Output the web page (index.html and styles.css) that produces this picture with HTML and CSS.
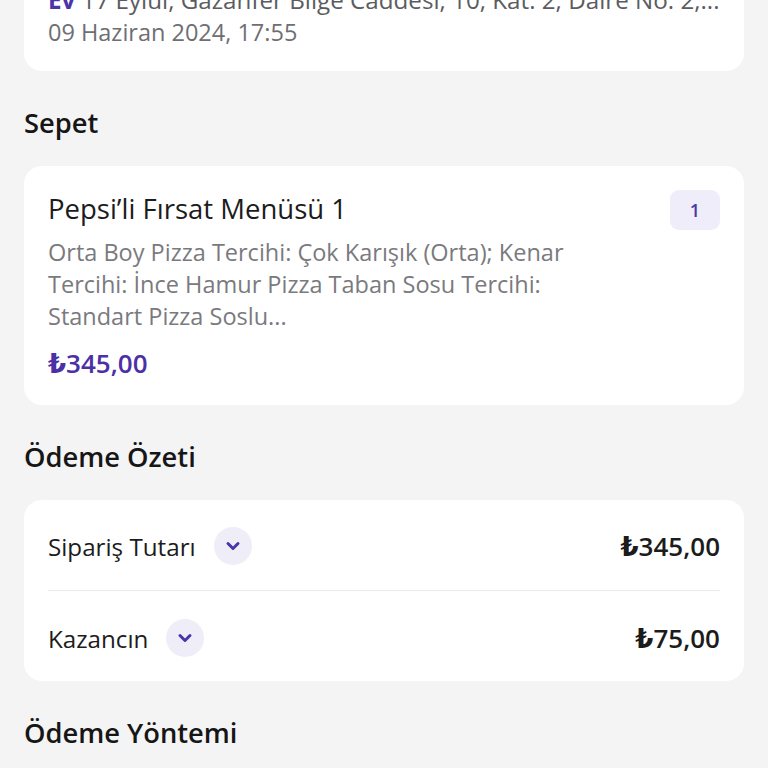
FILE: index.html
```html
<!DOCTYPE html>
<html lang="tr">
  <head>
    <meta charset="UTF-8">
    <title>Sipariş Detayı</title>
    <link rel="stylesheet" href="styles.css">
  </head>
  <body>
    <div class="page">

      <div class="card address">
        <p class="addr-line"><strong>Ev</strong> 17 Eylül, Gazanfer Bilge Caddesi, 10, Kat: 2, Daire No: 2,...</p>
        <p class="date">09 Haziran 2024, 17:55</p>
      </div>

      <h2>Sepet</h2>

      <div class="card basket">
        <div class="item-head">
          <div class="item-text">
            <p class="item-title">Pepsi’li Fırsat Menüsü 1</p>
            <p class="item-desc">Orta Boy Pizza Tercihi: Çok Karışık (Orta); Kenar Tercihi: İnce Hamur Pizza Taban Sosu Tercihi: Standart Pizza Soslu...</p>
          </div>
          <span class="qty">1</span>
        </div>
        <p class="item-price">₺345,00</p>
      </div>

      <h2>Ödeme Özeti</h2>

      <div class="card summary">
        <div class="row">
          <span class="label">Sipariş Tutarı</span>
          <span class="toggle">
            <svg width="16" height="10" viewBox="0 0 16 10"><path d="M3 2.5l5 5 5-5" fill="none" stroke="#4b35a8" stroke-width="3" stroke-linecap="round" stroke-linejoin="round"/></svg>
          </span>
          <span class="amount">₺345,00</span>
        </div>
        <div class="row">
          <span class="label">Kazancın</span>
          <span class="toggle">
            <svg width="16" height="10" viewBox="0 0 16 10"><path d="M3 2.5l5 5 5-5" fill="none" stroke="#4b35a8" stroke-width="3" stroke-linecap="round" stroke-linejoin="round"/></svg>
          </span>
          <span class="amount">₺75,00</span>
        </div>
      </div>

      <h2>Ödeme Yöntemi</h2>

    </div>
  </body>
</html>
```

FILE: styles.css
```css
html { margin: 0; padding: 0; background-color: #f4f4f4; }
body { margin: 0; font-family: "Open Sans", "DejaVu Sans", sans-serif; color: #1d1d1f; overflow: hidden; }
p { margin: 0; }

.page { margin-top: -40px; padding: 0 24px; }

.card { background-color: #fff; border-radius: 18px; }

h2 { margin: 35px 0 27px 0; font-size: 27.3px; font-weight: 600; line-height: 32px; color: #161616; }
.card + h2 { margin-top: 36px; }

/* address card */
.address { padding: 24px 24px 23px 24px; }
.addr-line, .date { font-size: 23.5px; line-height: 32px; white-space: nowrap; overflow: hidden; }
.addr-line { font-size: 24.2px; color: #5c5c60; }
.addr-line strong { color: #4b35a8; font-weight: 700; }
.date { color: #6e6e73; }

/* basket */
.basket { padding: 24px 24px 26px 24px; }
.item-head { display: flex; justify-content: space-between; align-items: flex-start; }
.item-title { font-size: 27.5px; line-height: 38px; color: #1c1c1c; }
.item-desc { margin-top: 8px; max-width: 550px; font-size: 23.5px; line-height: 32px; color: #7a7a7e; }
.qty { flex: none; width: 50px; height: 40px; display: flex; align-items: center; justify-content: center;
       background-color: #efedfa; border-radius: 9px; color: #4a3aa0; font-size: 18px; font-weight: 600; }
.item-price { margin-top: 15px; font-size: 26px; line-height: 32px; font-weight: 600; color: #4b30a6; }

/* summary */
.summary { padding: 0 24px; }
.row { display: flex; align-items: center; gap: 18px; height: 38px; padding: 27px 0 25px 0; }
.row + .row { border-top: 1px solid #ecebf4; padding-top: 28px; padding-bottom: 24px; }
.label { font-size: 24.2px; font-weight: 500; color: #1c1c1c; }
.toggle { width: 38px; height: 38px; border-radius: 50%; background-color: #efedf8;
          display: flex; align-items: center; justify-content: center; }
.amount { margin-left: auto; font-size: 26px; font-weight: 600; color: #1c1c1c; }
```
